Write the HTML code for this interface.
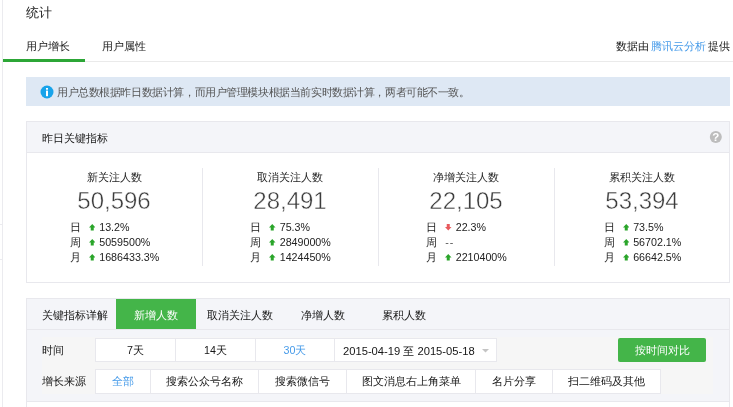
<!DOCTYPE html>
<html><head><meta charset="utf-8">
<style>
*{margin:0;padding:0;box-sizing:border-box;}
html,body{width:733px;height:407px;overflow:hidden;background:#fff;}
body{font-family:"Liberation Sans",sans-serif;font-size:10.7px;color:#333;position:relative;}
.a{position:absolute;white-space:nowrap;line-height:1;}
.r{position:absolute;}
.ct{position:absolute;white-space:nowrap;line-height:1;text-align:center;}
.up,.dn{display:inline-block;width:6px;height:6px;vertical-align:0px;}
.col{position:absolute;top:152px;width:176px;height:130px;}
.ctt{position:absolute;left:0;width:176px;top:20px;text-align:center;line-height:1;white-space:nowrap;color:#262626;}
.cnum{position:absolute;left:0;width:176px;top:37px;text-align:center;line-height:1;font-size:24px;color:#3c3c3c;-webkit-text-stroke:0.45px #fff;}
.rw{position:absolute;left:0;width:176px;top:68px;text-align:center;}
.rwi{display:inline-block;text-align:left;padding-left:1px;}
.row{height:15px;line-height:15px;white-space:nowrap;color:#222;}
.lb{display:inline-block;width:19px;}
.ar{display:inline-block;vertical-align:0.5px;margin-right:4px;}
.dash{letter-spacing:1px;color:#555;}
.btn{position:absolute;background:#fff;border:1px solid #e8e8ed;text-align:center;white-space:nowrap;color:#161616;}
.btn.sel{color:#459ae9;}
</style></head><body><div style="position:absolute;left:0;top:0;width:733px;height:407px;will-change:transform;opacity:0.999">
<!-- left sidebar remnants -->
<div class="r" style="left:2px;top:0;width:1px;height:407px;background:#ebebef"></div>
<div class="r" style="left:0;top:224px;width:2px;height:1px;background:#ebebef"></div>
<div class="r" style="left:0;top:259px;width:2px;height:1px;background:#ebebef"></div>

<div class="a" style="left:26px;top:6px;font-size:13px;color:#222">统计</div>
<div class="r" style="left:3px;top:61px;width:730px;height:1px;background:#eaeaea"></div>
<div class="r" style="left:3px;top:59px;width:82px;height:3px;background:#2ca636"></div>
<div class="a" style="left:26px;top:41px;color:#161616">用户增长</div>
<div class="a" style="left:102px;top:41px;color:#161616">用户属性</div>
<div class="a" style="right:3px;top:41px;color:#161616;word-spacing:-1px">数据由 <span style="color:#459ae9">腾讯云分析</span> 提供</div>

<div class="r" style="left:26px;top:77px;width:704px;height:29px;background:#dee8f4"></div>
<svg class="r" style="left:40px;top:85px" width="14" height="14" viewBox="0 0 14 14"><circle cx="7" cy="7" r="6.5" fill="#18a3ea"/><rect x="6" y="5.6" width="2" height="5.6" fill="#fff"/><rect x="6" y="3" width="2" height="1.7" fill="#fff"/></svg>
<div class="a" style="left:57px;top:87px;color:#555;letter-spacing:-0.42px">用户总数根据昨日数据计算，而用户管理模块根据当前实时数据计算，两者可能不一致。</div>

<!-- stats panel -->
<div class="r" style="left:26px;top:121px;width:704px;height:162px;border:1px solid #e8e8ed;background:#fff"></div>
<div class="r" style="left:27px;top:122px;width:702px;height:31px;background:#f4f5f9;border-bottom:1px solid #e8e8ed"></div>
<div class="a" style="left:42px;top:133px;color:#161616">昨日关键指标</div>
<svg class="r" style="left:709px;top:130px" width="14" height="14" viewBox="0 0 14 14"><circle cx="6.8" cy="6.9" r="6" fill="#bdbdbd"/><text x="6.8" y="11" font-family="Liberation Sans" font-size="11.5" font-weight="bold" fill="#fff" text-anchor="middle">?</text></svg>

<div class="r" style="left:202px;top:168px;width:1px;height:98px;background:#e8e8ed"></div>
<div class="r" style="left:378px;top:168px;width:1px;height:98px;background:#e8e8ed"></div>
<div class="r" style="left:554px;top:168px;width:1px;height:98px;background:#e8e8ed"></div>

<div class="col" style="left:26px">
 <div class="ctt">新关注人数</div>
 <div class="cnum">50,596</div>
 <div class="rw"><div class="rwi">
  <div class="row"><span class="lb">日</span><svg class="ar" width="6.5" height="6.5" viewBox="0 0 6.5 6.5"><polygon points="3.25,0 6.5,3.4 4.75,3.4 4.75,6.5 1.75,6.5 1.75,3.4 0,3.4" fill="#2aa52a"/></svg><span class="vl">13.2%</span></div>
  <div class="row"><span class="lb">周</span><svg class="ar" width="6.5" height="6.5" viewBox="0 0 6.5 6.5"><polygon points="3.25,0 6.5,3.4 4.75,3.4 4.75,6.5 1.75,6.5 1.75,3.4 0,3.4" fill="#2aa52a"/></svg><span class="vl">5059500%</span></div>
  <div class="row"><span class="lb">月</span><svg class="ar" width="6.5" height="6.5" viewBox="0 0 6.5 6.5"><polygon points="3.25,0 6.5,3.4 4.75,3.4 4.75,6.5 1.75,6.5 1.75,3.4 0,3.4" fill="#2aa52a"/></svg><span class="vl">1686433.3%</span></div>
 </div></div>
</div>
<div class="col" style="left:202px">
 <div class="ctt">取消关注人数</div>
 <div class="cnum">28,491</div>
 <div class="rw"><div class="rwi">
  <div class="row"><span class="lb">日</span><svg class="ar" width="6.5" height="6.5" viewBox="0 0 6.5 6.5"><polygon points="3.25,0 6.5,3.4 4.75,3.4 4.75,6.5 1.75,6.5 1.75,3.4 0,3.4" fill="#2aa52a"/></svg><span class="vl">75.3%</span></div>
  <div class="row"><span class="lb">周</span><svg class="ar" width="6.5" height="6.5" viewBox="0 0 6.5 6.5"><polygon points="3.25,0 6.5,3.4 4.75,3.4 4.75,6.5 1.75,6.5 1.75,3.4 0,3.4" fill="#2aa52a"/></svg><span class="vl">2849000%</span></div>
  <div class="row"><span class="lb">月</span><svg class="ar" width="6.5" height="6.5" viewBox="0 0 6.5 6.5"><polygon points="3.25,0 6.5,3.4 4.75,3.4 4.75,6.5 1.75,6.5 1.75,3.4 0,3.4" fill="#2aa52a"/></svg><span class="vl">1424450%</span></div>
 </div></div>
</div>
<div class="col" style="left:378px">
 <div class="ctt">净增关注人数</div>
 <div class="cnum">22,105</div>
 <div class="rw"><div class="rwi">
  <div class="row"><span class="lb">日</span><svg class="ar" width="6.5" height="6.5" viewBox="0 0 6.5 6.5"><polygon points="3.25,6.5 6.5,3.1 4.75,3.1 4.75,0 1.75,0 1.75,3.1 0,3.1" fill="#e8595c"/></svg><span class="vl">22.3%</span></div>
  <div class="row"><span class="lb">周</span><span class="dash">--</span></div>
  <div class="row"><span class="lb">月</span><svg class="ar" width="6.5" height="6.5" viewBox="0 0 6.5 6.5"><polygon points="3.25,0 6.5,3.4 4.75,3.4 4.75,6.5 1.75,6.5 1.75,3.4 0,3.4" fill="#2aa52a"/></svg><span class="vl">2210400%</span></div>
 </div></div>
</div>
<div class="col" style="left:554px">
 <div class="ctt">累积关注人数</div>
 <div class="cnum">53,394</div>
 <div class="rw"><div class="rwi">
  <div class="row"><span class="lb">日</span><svg class="ar" width="6.5" height="6.5" viewBox="0 0 6.5 6.5"><polygon points="3.25,0 6.5,3.4 4.75,3.4 4.75,6.5 1.75,6.5 1.75,3.4 0,3.4" fill="#2aa52a"/></svg><span class="vl">73.5%</span></div>
  <div class="row"><span class="lb">周</span><svg class="ar" width="6.5" height="6.5" viewBox="0 0 6.5 6.5"><polygon points="3.25,0 6.5,3.4 4.75,3.4 4.75,6.5 1.75,6.5 1.75,3.4 0,3.4" fill="#2aa52a"/></svg><span class="vl">56702.1%</span></div>
  <div class="row"><span class="lb">月</span><svg class="ar" width="6.5" height="6.5" viewBox="0 0 6.5 6.5"><polygon points="3.25,0 6.5,3.4 4.75,3.4 4.75,6.5 1.75,6.5 1.75,3.4 0,3.4" fill="#2aa52a"/></svg><span class="vl">66642.5%</span></div>
 </div></div>
</div>

<!-- bottom panel -->
<div class="r" style="left:26px;top:298px;width:704px;height:120px;border:1px solid #e8e8ed;background:#fff"></div>
<div class="r" style="left:27px;top:299px;width:702px;height:103px;background:#f4f5f9;border-bottom:1px solid #e8e8ed"></div>
<div class="r" style="left:27px;top:329px;width:702px;height:1px;background:#e8e8ed"></div>
<div class="r" style="left:116px;top:299px;width:80px;height:30px;background:#44b549"></div>
<div class="a" style="left:42px;top:310px;color:#161616">关键指标详解</div>
<div class="ct" style="left:116px;width:80px;top:310px;color:#fff">新增人数</div>
<div class="ct" style="left:196px;width:87px;top:310px;color:#161616">取消关注人数</div>
<div class="ct" style="left:283px;width:79px;top:310px;color:#161616">净增人数</div>
<div class="ct" style="left:362px;width:83px;top:310px;color:#161616">累积人数</div>

<div class="r" style="left:42px;top:337px;width:671px;height:57px;background:#f6f6f6"></div>
<div class="a" style="left:42px;top:345px;color:#161616">时间</div>
<div class="a" style="left:42px;top:376px;color:#161616">增长来源</div>
<div class="btn " style="left:95px;top:338px;width:81px;height:24px;line-height:22px">7天</div>
<div class="btn " style="left:175px;top:338px;width:81px;height:24px;line-height:22px">14天</div>
<div class="btn sel" style="left:255px;top:338px;width:80px;height:24px;line-height:22px">30天</div>
<div class="btn" style="left:334px;top:338px;width:163px;height:24px;line-height:24px;text-align:left;padding-left:8px;font-size:11.2px">2015-04-19 至 2015-05-18<svg style="position:absolute;left:147px;top:9.5px" width="7" height="4" viewBox="0 0 7 4"><polygon points="0,0 7,0 3.5,3.5" fill="#c4c4c4"/></svg></div>
<div class="r" style="left:618px;top:338px;width:88px;height:24px;line-height:24px;background:#44b549;color:#fff;text-align:center;border-radius:2px">按时间对比</div>
<div class="btn sel" style="left:95px;top:369px;width:56px;height:25px;line-height:23px">全部</div>
<div class="btn " style="left:150px;top:369px;width:109px;height:25px;line-height:23px">搜索公众号名称</div>
<div class="btn " style="left:258px;top:369px;width:89px;height:25px;line-height:23px">搜索微信号</div>
<div class="btn " style="left:346px;top:369px;width:130px;height:25px;line-height:23px">图文消息右上角菜单</div>
<div class="btn " style="left:475px;top:369px;width:78px;height:25px;line-height:23px">名片分享</div>
<div class="btn " style="left:552px;top:369px;width:109px;height:25px;line-height:23px">扫二维码及其他</div>
</div></body></html>
